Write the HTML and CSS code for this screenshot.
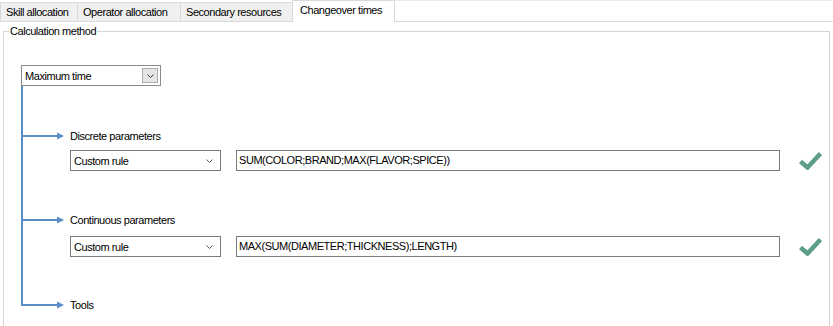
FILE: index.html
```html
<!DOCTYPE html>
<html>
<head>
<meta charset="utf-8">
<link rel="stylesheet" href="styles.css">
</head>
<body>
<div class="window">
  <div class="tabs">
    <div class="tab t1">Skill allocation</div>
    <div class="tab t2">Operator allocation</div>
    <div class="tab t3">Secondary resources</div>
    <div class="tab active">Changeover times</div>
    <div class="tab-fill"></div>
  </div>
  <fieldset class="group">
    <legend>Calculation method</legend>
    <div class="combo combo-main">
      <span>Maximum time</span>
      <span class="combo-btn">
        <svg width="7" height="4" viewBox="0 0 7 4"><path d="M0.5 0.5 L3.5 3.5 L6.5 0.5" fill="none" stroke="#333" stroke-width="1"/></svg>
      </span>
    </div>
    <div class="tree">
      <div class="branch b1">
        <svg class="arrow" width="45" height="16" viewBox="0 0 45 16"><rect x="0" y="7" width="36" height="2" fill="#5b8ec8"/><polygon points="34,4.5 41,8 34,11.5" fill="#5b8ec8"/></svg>
        <span>Discrete parameters</span>
      </div>
      <div class="rule-row r1">
        <div class="combo combo-rule">
          <span>Custom rule</span>
          <svg width="7" height="4" viewBox="0 0 7 4"><path d="M0.5 0.5 L3.5 3.5 L6.5 0.5" fill="none" stroke="#555" stroke-width="1"/></svg>
        </div>
        <div class="formula">SUM(COLOR;BRAND;MAX(FLAVOR;SPICE))</div>
        <svg class="check" width="23" height="19" viewBox="0 0 23 19"><path d="M1.5 10.5 L8.5 16.5 L21.5 2.5" fill="none" stroke="#5c9f86" stroke-width="4.5" stroke-linejoin="miter"/></svg>
      </div>
      <div class="branch b2">
        <svg class="arrow" width="45" height="16" viewBox="0 0 45 16"><rect x="0" y="7" width="36" height="2" fill="#5b8ec8"/><polygon points="34,4.5 41,8 34,11.5" fill="#5b8ec8"/></svg>
        <span>Continuous parameters</span>
      </div>
      <div class="rule-row r2">
        <div class="combo combo-rule">
          <span>Custom rule</span>
          <svg width="7" height="4" viewBox="0 0 7 4"><path d="M0.5 0.5 L3.5 3.5 L6.5 0.5" fill="none" stroke="#555" stroke-width="1"/></svg>
        </div>
        <div class="formula">MAX(SUM(DIAMETER;THICKNESS);LENGTH)</div>
        <svg class="check" width="23" height="19" viewBox="0 0 23 19"><path d="M1.5 10.5 L8.5 16.5 L21.5 2.5" fill="none" stroke="#5c9f86" stroke-width="4.5" stroke-linejoin="miter"/></svg>
      </div>
      <div class="branch b3">
        <svg class="arrow" width="45" height="16" viewBox="0 0 45 16"><rect x="0" y="7" width="36" height="2" fill="#5b8ec8"/><polygon points="34,4.5 41,8 34,11.5" fill="#5b8ec8"/></svg>
        <span>Tools</span>
      </div>
    </div>
  </fieldset>
</div>
</body>
</html>
```
FILE: styles.css
```css
html, body {
  margin: 0;
  padding: 0;
  background: #ffffff;
  overflow: hidden;
}
body {
  font-family: "Liberation Sans", Arial, sans-serif;
  font-size: 11px;
  letter-spacing: -0.45px;
  color: #000;
}
.window {
  width: 833px;
  height: 326px;
  overflow: hidden;
}
.tabs {
  display: flex;
  align-items: flex-end;
  height: 22px;
}
.tab {
  box-sizing: border-box;
  height: 20px;
  line-height: 18px;
  padding: 0 5px;
  background: #f0f0f0;
  border: 1px solid #d9d9d9;
  margin-left: -1px;
  white-space: nowrap;
}
.tab.t1 { margin-left: 0; width: 78px; }
.tab.t2 { width: 104px; }
.tab.t3 { width: 113px; }
.tab.active {
  height: 22px;
  width: 103px;
  line-height: 19px;
  padding-left: 7px;
  background: #fff;
  border-bottom: none;
}
.tab-fill {
  flex: 1;
  box-sizing: border-box;
  height: 22px;
  border-top: 1px solid #ececec;
  border-bottom: 1px solid #d9d9d9;
}
.group {
  margin: 2px 3px 0 3px;
  padding: 0 5px 40px 5px;
  border: 1px solid #d5d5d5;
  min-height: 300px;
}
.group legend {
  padding: 0 1px;
  line-height: 14px;
  height: 14px;
}
.combo {
  box-sizing: border-box;
  height: 21px;
  border: 1px solid #8a8a8a;
  background: #fff;
  display: flex;
  align-items: center;
}
.combo-main {
  margin-top: 27px;
  margin-left: 12px;
  width: 140px;
  padding: 0 2px 0 3px;
  justify-content: space-between;
}
.combo-btn {
  box-sizing: border-box;
  width: 16px;
  height: 15px;
  border: 1px solid #adadad;
  background: #e5e5e5;
  display: flex;
  align-items: center;
  justify-content: center;
}
.tree {
  position: relative;
  display: flow-root;
  margin-left: 12px;
  padding-left: 2px;
}
.tree::before {
  content: "";
  position: absolute;
  left: 0;
  top: 0;
  bottom: 7px;
  width: 2px;
  background: #5b8ec8;
}
.branch {
  display: flex;
  align-items: center;
  height: 16px;
}
.branch .arrow {
  flex: none;
  margin-right: 2px;
}
.b1 { margin-top: 42px; }
.b2 { margin-top: 41px; }
.b3 { margin-top: 40px; }
.rule-row {
  display: flex;
  align-items: center;
  margin-left: 47px;
  height: 21px;
}
.r1 { margin-top: 6px; }
.r2 { margin-top: 8px; }
.combo-rule {
  width: 151px;
  padding: 0 7px 0 3px;
  justify-content: space-between;
  border-color: #7a7a7a;
}
.formula {
  box-sizing: border-box;
  margin-left: 15px;
  width: 544px;
  height: 21px;
  line-height: 19px;
  padding: 0 2px;
  border: 1px solid #7a7a7a;
  white-space: nowrap;
}
.check {
  margin-left: 19px;
  flex: none;
}
```
